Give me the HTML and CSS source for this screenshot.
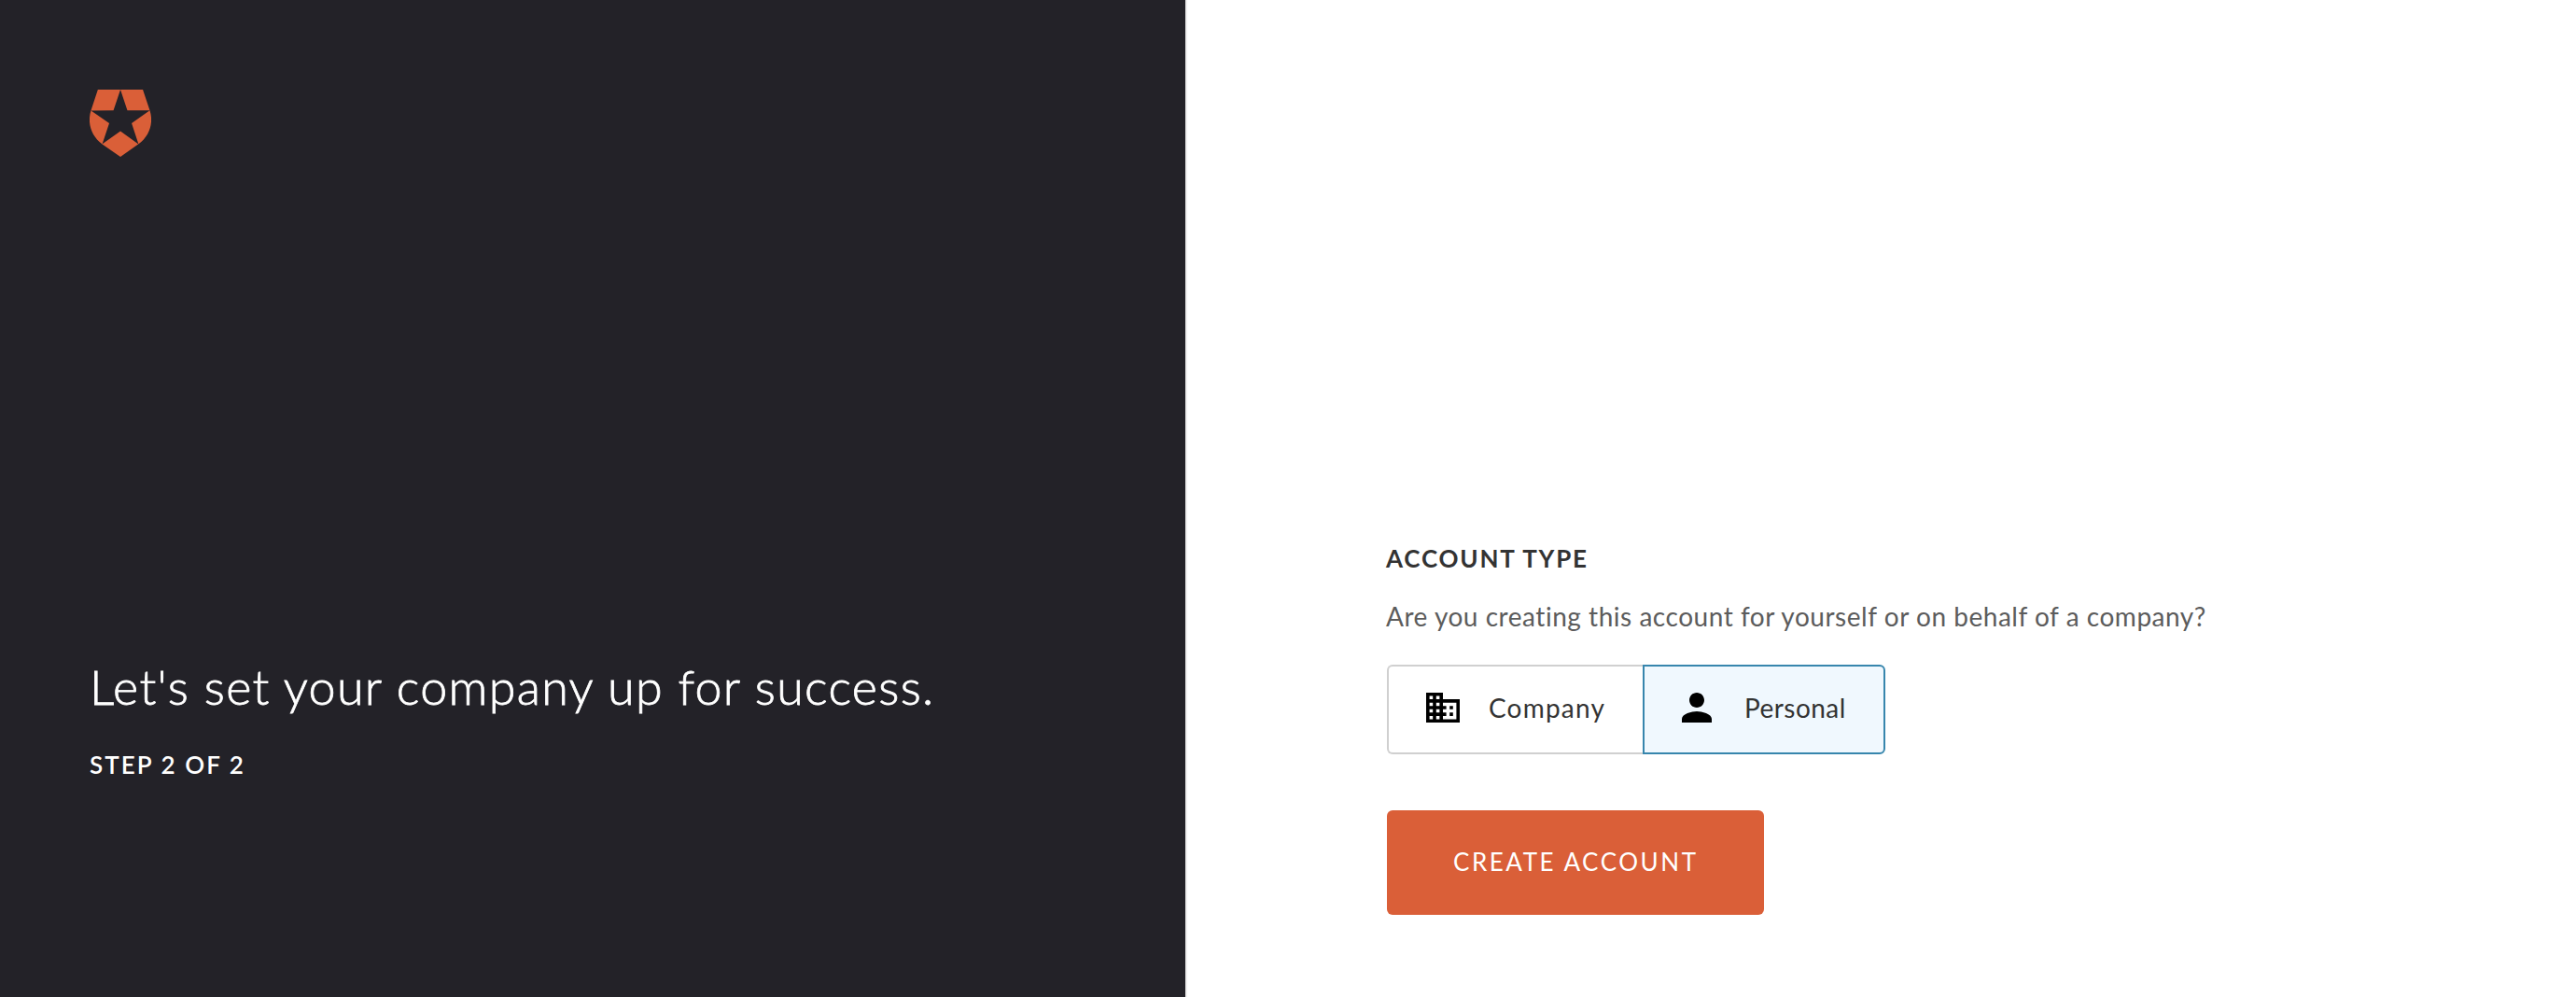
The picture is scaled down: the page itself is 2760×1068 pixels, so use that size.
FILE: index.html
```html
<!DOCTYPE html>
<html lang="en">
<head>
<meta charset="utf-8">
<title>Create account</title>
<link rel="stylesheet" href="styles.css">
</head>
<body>
<div class="page">
  <aside class="intro">
    <svg class="logo" viewBox="1.54 0 20.92 24" preserveAspectRatio="none" aria-hidden="true">
      <path d="M21.98 7.448L19.62 0H4.347L2.02 7.448c-1.352 4.312.03 9.206 3.815 12.015L12.007 24l6.157-4.552c3.755-2.81 5.182-7.688 3.815-12.015l-6.16 4.58 2.343 7.45-6.157-4.597-6.158 4.58 2.358-7.433-6.188-4.55 7.63-.045L12.008 0l2.356 7.404 7.615.044z"/>
    </svg>
    <div class="intro-text">
      <h1 class="title">Let's set your company up for success.</h1>
      <p class="step">STEP 2 OF 2</p>
    </div>
  </aside>
  <main class="form">
    <h2 class="label">ACCOUNT TYPE</h2>
    <p class="hint">Are you creating this account for yourself or on behalf of a company?</p>
    <div class="segments">
      <button class="segment segment-company" type="button">
        <svg class="icon-company" viewBox="2 3 20 18" preserveAspectRatio="none" aria-hidden="true">
          <path d="M12 7V3H2v18h20V7H12zM6 19H4v-2h2v2zm0-4H4v-2h2v2zm0-4H4V9h2v2zm0-4H4V5h2v2zm4 12H8v-2h2v2zm0-4H8v-2h2v2zm0-4H8V9h2v2zm0-4H8V5h2v2zm10 12h-8v-2h2v-2h-2v-2h2v-2h-2V9h8v10zm-2-8h-2v2h2v-2zm0 4h-2v2h2v-2z"/>
        </svg>
        <span class="company-text">Company</span>
      </button>
      <button class="segment segment-personal" type="button">
        <svg class="icon-person" viewBox="4 4 16 16" aria-hidden="true">
          <path d="M12 12c2.21 0 4-1.79 4-4s-1.79-4-4-4-4 1.79-4 4 1.79 4 4 4zm0 2c-2.67 0-8 1.34-8 4v2h16v-2c0-2.66-5.33-4-8-4z"/>
        </svg>
        <span class="personal-text">Personal</span>
      </button>
    </div>
    <button class="submit" type="submit">CREATE ACCOUNT</button>
  </main>
</div>
</body>
</html>
```
FILE: styles.css
```css
* {
  box-sizing: border-box;
}

body {
  margin: 0;
  font-family: Lato, "Liberation Sans", sans-serif;
  background: #fff;
}

h1, h2, p {
  margin: 0;
}

button {
  font: inherit;
  text-align: left;
}

.page {
  display: grid;
  grid-template-columns: 1270px 1fr;
  height: 1068px;
}

.intro {
  display: flex;
  flex-direction: column;
  justify-content: space-between;
  padding: 96px 96px 233px;
  background: #232228;
  color: #fff;
}

.logo {
  width: 66px;
  height: 72px;
  fill: #da5f38;
}

.title {
  font-size: 52px;
  font-weight: 300;
  line-height: 60px;
  letter-spacing: 1.32px;
  white-space: nowrap;
  -webkit-text-stroke: 0.8px #fff;
}

.step {
  margin-top: 38px;
  font-size: 26px;
  font-weight: 600;
  line-height: 32px;
  letter-spacing: 2.05px;
}

.form {
  display: flex;
  flex-direction: column;
  align-items: flex-start;
  padding: 582px 0 0 214px;
  border-left: 2px solid #eee;
}

.label {
  margin-left: -1px;
  color: #333;
  font-size: 26px;
  font-weight: 700;
  line-height: 32px;
  letter-spacing: 1.8px;
}

.hint {
  margin-top: 28px;
  margin-left: -1px;
  color: #5c5c5c;
  font-size: 28px;
  line-height: 36px;
  letter-spacing: 0.53px;
  white-space: nowrap;
}

.segments {
  display: flex;
  margin-top: 34px;
}

.segment {
  display: flex;
  align-items: center;
  height: 96px;
  padding: 0 0 4px 40px;
  border: 2px solid #d0d0d0;
  background: #fff;
  color: #333;
  font-size: 28px;
  line-height: 36px;
}

.segment-company {
  width: 274px;
  border-right: 0;
  border-radius: 6px 0 0 6px;
}

.segment-personal {
  width: 260px;
  border-color: #3786ad;
  border-radius: 0 6px 6px 0;
  background: #f0f8fe;
}

.icon-company {
  width: 36px;
  height: 32px;
  margin-right: 31px;
}

.icon-person {
  width: 32px;
  height: 32px;
  margin-right: 35px;
}

.company-text {
  letter-spacing: 1.2px;
}

.personal-text {
  letter-spacing: 0.45px;
}

.submit {
  width: 404px;
  height: 112px;
  margin-top: 60px;
  padding: 0 0 3px 71px;
  border: 0;
  border-radius: 6px;
  background: #da5f38;
  color: #fff;
  font-size: 26px;
  line-height: 32px;
  letter-spacing: 2.55px;
  white-space: nowrap;
}
```
